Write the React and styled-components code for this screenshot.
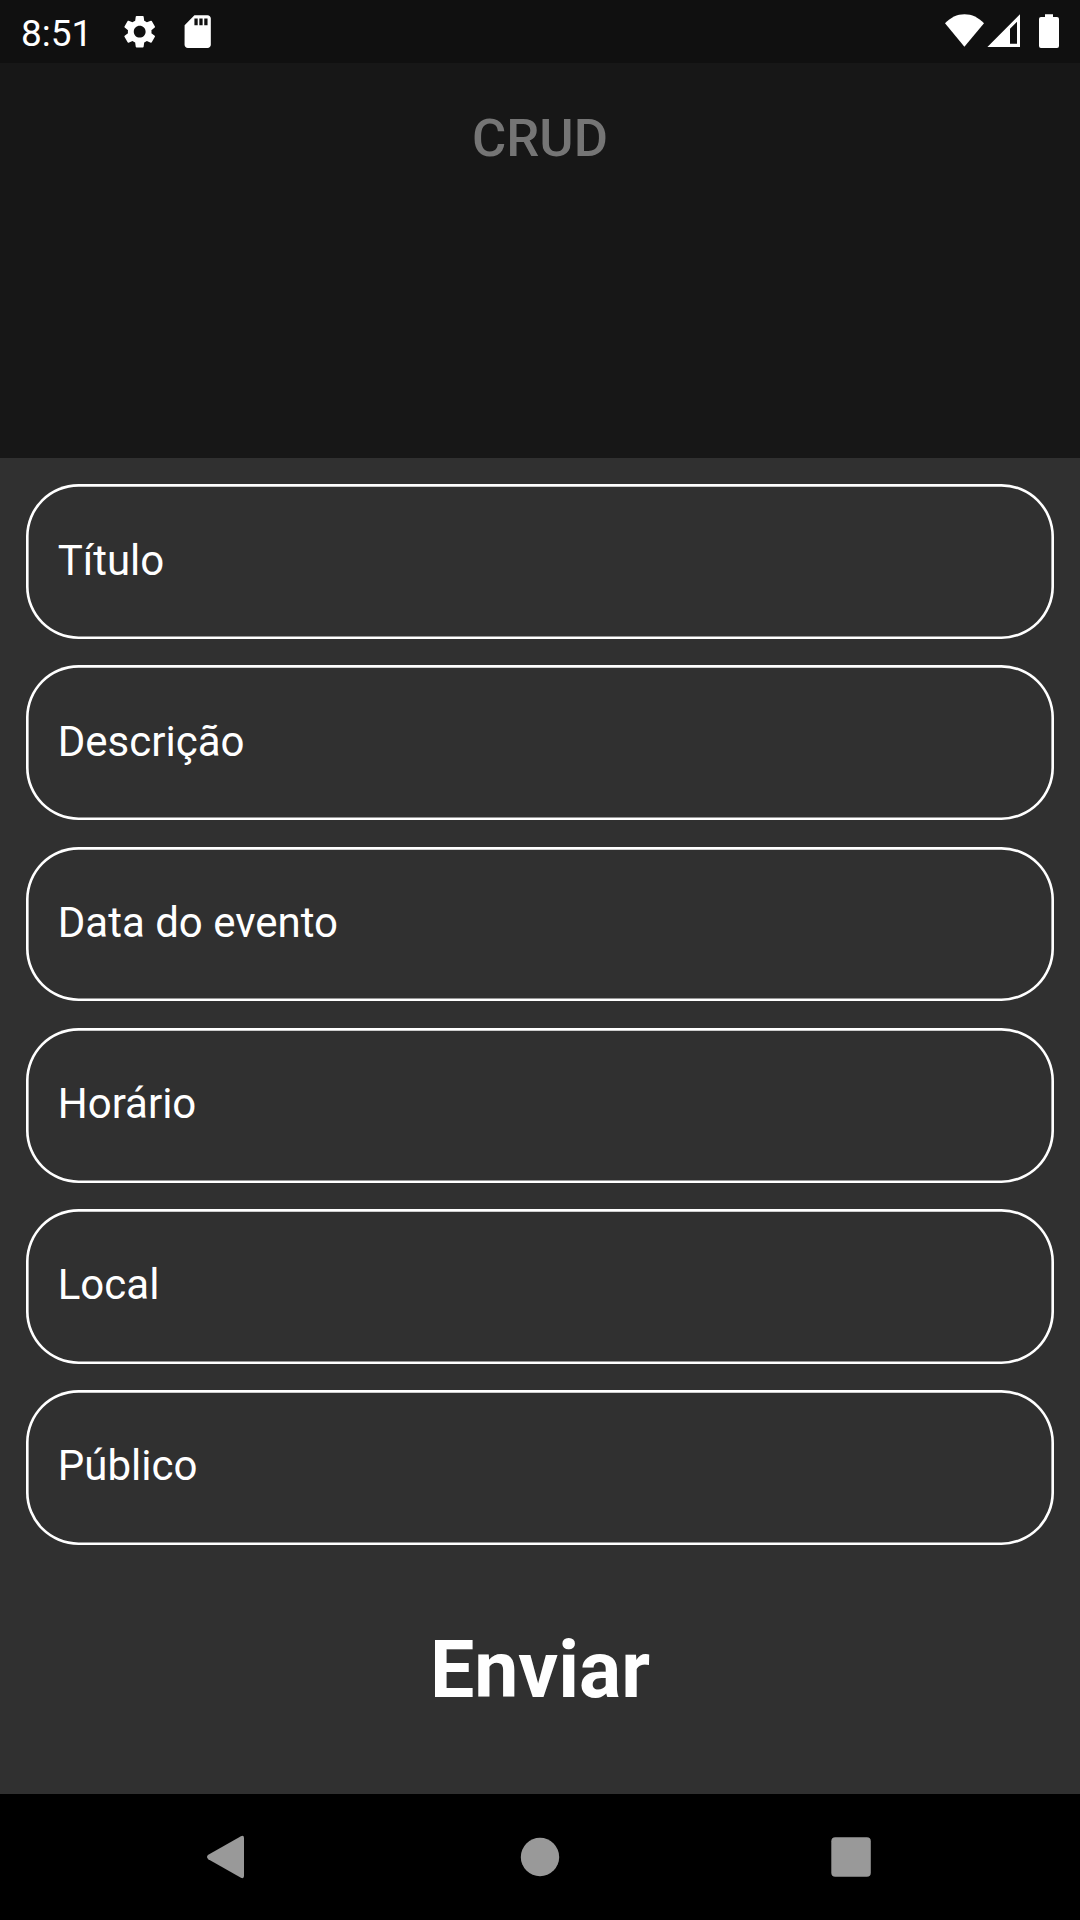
import React from "react";
import styled, { createGlobalStyle } from "styled-components";
import { MdSettings, MdSdCard } from "react-icons/md";

const GlobalStyle = createGlobalStyle`
  *, *::before, *::after { box-sizing: border-box; }
  body { margin: 0; background: #303030; }
`;

const Screen = styled.div`
  width: 1080px;
  height: 1920px;
  display: flex;
  flex-direction: column;
  overflow: hidden;
  background: #303030;
  color: #fff;
  font-family: Roboto, "Noto Sans", sans-serif;
`;

const StatusBar = styled.header`
  height: 63px;
  flex: none;
  display: flex;
  justify-content: space-between;
  background: #101010;
`;

const StatusGroup = styled.div`
  display: flex;
  align-items: flex-start;
`;

const Clock = styled.span`
  width: 99.3px;
  padding: 12px 0 0 21px;
  box-sizing: content-box;
  font-size: 37px;
  line-height: 43px;
`;

const Notification = styled.span`
  display: flex;
  width: 58px;
  padding-top: 12px;
  svg {
    width: 39.4px;
    height: 39.4px;
  }
`;

const Indicator = styled.svg`
  display: block;
  flex: none;
  width: ${(p) => p.$width}px;
  height: 63px;
  margin-right: ${(p) => p.$after || 0}px;
  fill: #fff;
`;

const AppBar = styled.div`
  height: 395px;
  flex: none;
  display: flex;
  justify-content: center;
  padding-top: 44px;
  background: #171717;
`;

const Title = styled.h1`
  margin: 0;
  font-size: 52.5px;
  font-weight: 500;
  line-height: 63px;
  color: #757575;
`;

const Form = styled.form`
  flex: 1;
  display: flex;
  flex-direction: column;
  gap: 26.25px;
  padding: 26.25px;
`;

const Field = styled.label`
  height: 154.875px;
  flex: none;
  display: flex;
  align-items: center;
  padding: 0 31.5px 2px;
  border-radius: 52.5px;
  box-shadow: inset 0 0 0 2.625px #fff;
  font-size: 42px;
  line-height: 50px;
`;

const Submit = styled.button`
  align-self: center;
  margin-top: 52px;
  padding: 0;
  border: 0;
  background: none;
  color: #fff;
  font: 700 78.75px/94px Roboto, "Noto Sans", sans-serif;
`;

const NavBar = styled.nav`
  height: 126px;
  flex: none;
  display: flex;
  justify-content: center;
  align-items: center;
  gap: 185px;
  background: #000;
`;

const NavIcon = styled.svg`
  display: block;
  width: 126px;
  height: 126px;
  fill: #999;
`;

const fields = ["Título", "Descrição", "Data do evento", "Horário", "Local", "Público"];

export default function App() {
  return (
    <>
      <GlobalStyle />
      <Screen>
        <StatusBar>
          <StatusGroup>
            <Clock>8:51</Clock>
            <Notification><MdSettings /></Notification>
            <Notification><MdSdCard /></Notification>
          </StatusGroup>
          <StatusGroup>
            <Indicator $width={39} $after={3} viewBox="0 0 39 63">
              <path d="M19.4 46.8 0 23.2C5.5 17.5 12 14.2 19.5 14.2S33.5 17.5 39 23.2Z" />
            </Indicator>
            <Indicator $width={33} $after={19} viewBox="0 0 33 63">
              <path fillRule="evenodd" d="M.4 47 33 14.2V47ZM23 28.8V43.8H30V21.8Z" />
            </Indicator>
            <Indicator $width={20} $after={21} viewBox="0 0 20 63">
              <path d="M6 14.2H14V17H18Q20 17 20 19V46Q20 48 18 48H2Q0 48 0 46V19Q0 17 2 17H6Z" />
            </Indicator>
          </StatusGroup>
        </StatusBar>
        <AppBar>
          <Title>CRUD</Title>
        </AppBar>
        <Form>
          {fields.map((name) => (
            <Field key={name}>{name}</Field>
          ))}
          <Submit type="button">Enviar</Submit>
        </Form>
        <NavBar>
          <NavIcon viewBox="0 0 126 126">
            <path d="M42.3 60.8 74.5 42.4Q78 40.8 78 44V82Q78 85.200 74.5 83.6L42.3 65.2Q39.700 63 42.3 60.8Z" />
          </NavIcon>
          <NavIcon viewBox="0 0 126 126">
            <circle cx="63" cy="63" r="19.2" />
          </NavIcon>
          <NavIcon viewBox="0 0 126 126">
            <rect x="43.3" y="43.2" width="39.5" height="39.6" rx="4" />
          </NavIcon>
        </NavBar>
      </Screen>
    </>
  );
}
